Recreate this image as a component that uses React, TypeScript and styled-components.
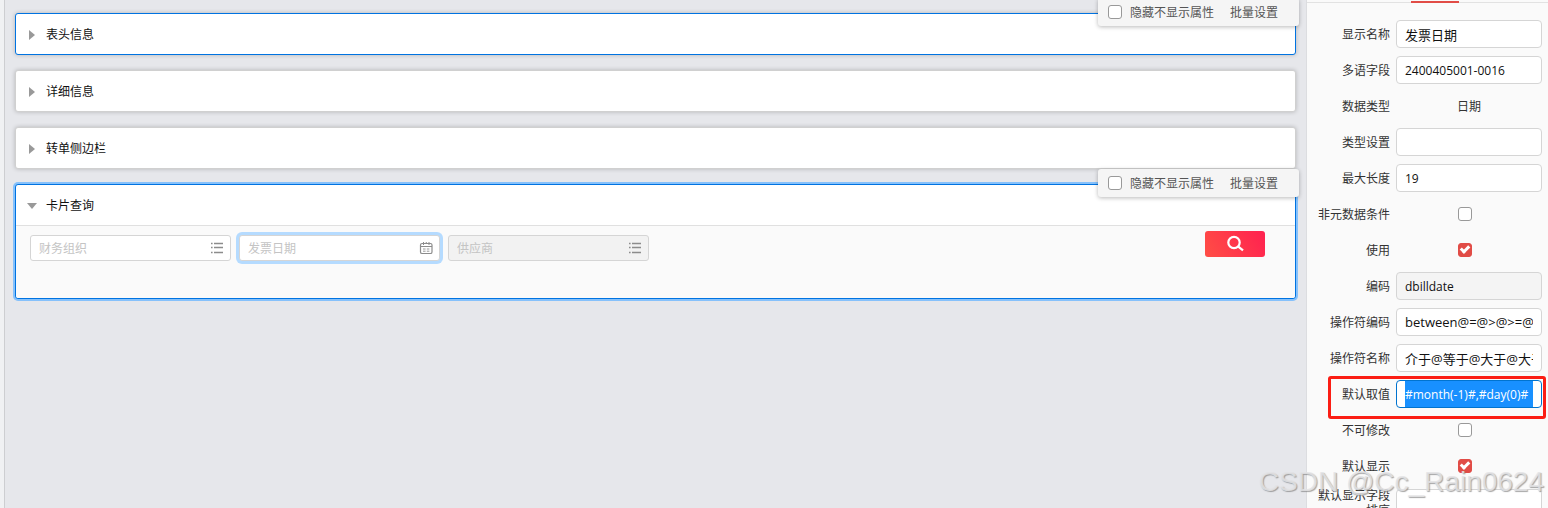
import React, { useId, useState } from 'react';
import styled, { createGlobalStyle, css } from 'styled-components';

const GlobalStyle = createGlobalStyle`
  *, *::before, *::after { box-sizing: border-box; }
  body {
    margin: 0;
    overflow: hidden;
    font: 12px/18px "Open Sans", "Noto Sans CJK SC", sans-serif;
    color: #111;
    background: #e6e7eb;
  }
  button, input { font: inherit; color: inherit; margin: 0; }
`;

const Page = styled.div`
  position: relative;
  display: flex;
  height: 100vh;
  overflow: hidden;
`;

const Rail = styled.div`
  flex: 0 0 5px;
  background: #f0f1f3;
  border-right: 1px solid #cdced1;
`;

const Canvas = styled.main`
  flex: 1;
  min-width: 0;
  display: flex;
  flex-direction: column;
  gap: 15px;
  padding: 13px 10px;
`;

const Card = styled.section<{ $state: 'plain' | 'active' | 'selected' }>`
  position: relative;
  background: #fff;
  border: 1px solid ${p => (p.$state === 'plain' ? '#d0d0d0' : '#0073e1')};
  border-radius: 3px;
  box-shadow: ${p => (p.$state === 'selected' ? '0 0 0 2px #86c1fb' : '0 0 4px rgba(0, 0, 0, 0.22)')};
`;

const CardHead = styled.button`
  display: flex;
  align-items: center;
  width: 100%;
  height: 40px;
  padding: 2px 12px 0;
  gap: 10px;
  border: 0;
  background: none;
  text-align: left;
  cursor: pointer;
`;

const Arrow = styled.svg`
  width: 8px;
  height: 10px;
  overflow: visible;
  fill: #999;
`;

const CardBody = styled.div`
  display: flex;
  align-items: flex-start;
  gap: 8px;
  height: 73px;
  padding: 9px 30px 0 14px;
  background: #fafafa;
  border-top: 1px solid #e0e0e0;
  border-radius: 0 0 3px 3px;
`;

const Toolbar = styled.div`
  position: absolute;
  z-index: 1;
  top: -16px;
  right: -4px;
  display: flex;
  align-items: center;
  height: 28px;
  padding: 0 21px 0 10px;
  gap: 16px;
  background: #f5f5f5;
  border-radius: 3px;
  box-shadow: 0 1px 4px rgba(0, 0, 0, 0.28);
  color: #555;
  line-height: 20px;
`;

const CheckLabel = styled.label`
  display: flex;
  align-items: center;
  gap: 8px;
`;

const ToolText = styled.span`
  padding-top: 2px;
`;

const TextButton = styled.button`
  padding: 2px 0 0;
  border: 0;
  background: none;
  cursor: pointer;
`;

const CheckBox = styled.input.attrs({ type: 'checkbox' })`
  appearance: none;
  display: grid;
  justify-content: center;
  width: 14px;
  height: 14px;
  background: #fff;
  border: 1px solid #999;
  border-radius: 3px;
  &:checked {
    background: #e14c46;
    border-color: #e14c46;
  }
  &:checked::after {
    content: '';
    width: 6px;
    height: 9px;
    border: solid #fff;
    border-width: 0 3px 3px 0;
    transform: rotate(45deg);
  }
`;

const Field = styled.div<{ $focus?: boolean; $off?: boolean }>`
  display: flex;
  align-items: center;
  width: 201px;
  height: 26px;
  padding: 0 6px 0 8px;
  background: ${p => (p.$off ? '#f2f2f2' : '#fff')};
  border: 1px solid #d5d5d5;
  border-radius: 3px;
  ${p => p.$focus && css`box-shadow: 0 0 0 3px #b5dbff;`}
`;

const FieldInput = styled.input`
  flex: 1;
  min-width: 0;
  padding: 2px 0 0;
  border: 0;
  outline: 0;
  background: none;
  &::placeholder { color: #c4c4c4; opacity: 1; }
`;

const IconButton = styled.button`
  display: flex;
  padding: 0;
  border: 0;
  background: none;
  color: #8c8c8c;
`;

const SearchButton = styled.button`
  display: flex;
  align-items: center;
  justify-content: center;
  width: 60px;
  height: 26px;
  margin: -4px 0 0 auto;
  padding: 0;
  border: 0;
  border-radius: 3px;
  background: linear-gradient(60deg, #ff4e45, #ff2150);
  color: #fff;
`;

const Panel = styled.aside`
  flex: 0 0 242px;
  background: #fafafa;
  border-left: 1px solid #dcdde0;
`;

const TabStrip = styled.div`
  display: flex;
  align-items: flex-end;
  height: 3px;
  padding-left: 104px;
  border-bottom: 1px solid #e2e2e2;
`;

const ActiveTab = styled.div`
  width: 48px;
  height: 2px;
  margin-bottom: -1px;
  background: #e14c46;
`;

const Form = styled.form`
  display: flex;
  flex-direction: column;
  gap: 8px;
  padding: 17px 6px 0 11px;
`;

const Row = styled.div`
  position: relative;
  display: grid;
  grid-template-columns: 72px 1fr;
  column-gap: 6px;
  align-items: center;
  height: 28px;
`;

const RowLabel = styled.label`
  text-align: right;
  line-height: 15px;
  color: #333;
`;

const RowText = styled.output`
  padding-top: 2px;
  text-align: center;
  color: #333;
`;

const RowCheck = styled.div`
  display: flex;
  justify-content: center;
  padding-right: 8px;
`;

const RowInput = styled.input<{ $size: number; $selected?: boolean }>`
  width: 100%;
  height: 28px;
  padding: 0 8px;
  font-size: ${p => p.$size}px;
  border: 1px solid #d5d5d5;
  border-radius: 4px;
  outline: 0;
  background: #fff;
  &:read-only { background: #f4f4f4; }
  ${p => p.$selected && css`
    color: #fff;
    border-color: #0073cf;
    background: linear-gradient(#1890ff, #1890ff) content-box, #fff;
  `}
`;

const Highlight = styled.span`
  position: absolute;
  inset: -4px -4px -11px 10px;
  border: 3px solid #fb1d14;
  border-radius: 3px;
  pointer-events: none;
`;

const Watermark = styled.div`
  position: absolute;
  right: 4px;
  bottom: 8px;
  font: 28px/36px "Liberation Sans", Arial, sans-serif;
  color: rgba(228, 228, 230, 0.85);
  text-shadow: 1px 1px 1px rgba(120, 120, 120, 0.65);
  pointer-events: none;
`;

const ListIcon = () => (
  <svg width="14" height="12" viewBox="0 0 14 12" stroke="currentColor" fill="none">
    <path d="M4 1.5h9M4 5.5h9M4 10.5h9" strokeWidth="1.3" />
    <path d="M1 1.5h1.6M1 5.5h1.6M1 10.5h1.6" strokeWidth="1.6" />
  </svg>
);

const CalendarIcon = () => (
  <svg width="14" height="14" viewBox="0 0 14 14" stroke="currentColor" fill="none">
    <rect x="1.5" y="2.5" width="11.5" height="10" rx="1.6" strokeWidth="1.2" />
    <path d="M1.5 5.5h11.5M4.5 1v3M7.25 1v2M10 1v3" />
    <path d="M4 8h2.6M7.8 8h2.6M4 10.2h2.6M7.8 10.2h2.6" strokeWidth="0.9" />
  </svg>
);

const SearchIcon = () => (
  <svg width="18" height="18" viewBox="0 0 18 18" stroke="currentColor" fill="none" strokeWidth="2.2">
    <circle cx="8" cy="7.5" r="5.7" />
    <path d="M12 11.3l5 4.1" />
  </svg>
);

function CardTools() {
  return (
    <Toolbar>
      <CheckLabel><CheckBox /><ToolText>隐藏不显示属性</ToolText></CheckLabel>
      <TextButton type="button">批量设置</TextButton>
    </Toolbar>
  );
}

type CardProps = {
  title: string;
  state?: 'plain' | 'active' | 'selected';
  expanded?: boolean;
  children?: React.ReactNode;
};

function AreaCard({ title, state = 'plain', expanded = false, children }: CardProps) {
  const [open, setOpen] = useState(expanded);
  return (
    <Card $state={state}>
      {state !== 'plain' && <CardTools />}
      <CardHead type="button" aria-expanded={open} onClick={() => setOpen(!open)}>
        <Arrow viewBox="0 0 8 10"><path d={open ? 'M-1 2h10l-5 6z' : 'M1 0l6 5-6 5z'} /></Arrow>
        {title}
      </CardHead>
      {open && children && <CardBody>{children}</CardBody>}
    </Card>
  );
}

type PropertyProps = {
  label: string;
  value?: string;
  size?: number;
  kind?: 'input' | 'text' | 'check';
  checked?: boolean;
  locked?: boolean;
  selected?: boolean;
};

function Property({ label, value = '', size = 13, kind = 'input', checked, locked, selected }: PropertyProps) {
  const id = useId();
  return (
    <Row>
      <RowLabel htmlFor={id}>{label}</RowLabel>
      {kind === 'text' && <RowText id={id}>{value}</RowText>}
      {kind === 'check' && <RowCheck><CheckBox id={id} defaultChecked={checked} /></RowCheck>}
      {kind === 'input' && (
        <RowInput id={id} type="text" defaultValue={value} readOnly={locked} $size={size} $selected={selected} />
      )}
      {selected && <Highlight />}
    </Row>
  );
}

export default function App() {
  return (
    <>
      <GlobalStyle />
      <Page>
        <Rail />
        <Canvas>
          <AreaCard title="表头信息" state="active" />
          <AreaCard title="详细信息" />
          <AreaCard title="转单侧边栏" />
          <AreaCard title="卡片查询" state="selected" expanded>
            <Field>
              <FieldInput placeholder="财务组织" aria-label="财务组织" />
              <IconButton type="button" aria-label="财务组织"><ListIcon /></IconButton>
            </Field>
            <Field $focus>
              <FieldInput placeholder="发票日期" aria-label="发票日期" />
              <IconButton type="button" aria-label="发票日期"><CalendarIcon /></IconButton>
            </Field>
            <Field $off>
              <FieldInput placeholder="供应商" aria-label="供应商" disabled />
              <IconButton type="button" aria-label="供应商" disabled><ListIcon /></IconButton>
            </Field>
            <SearchButton type="button" aria-label="查询"><SearchIcon /></SearchButton>
          </AreaCard>
        </Canvas>
        <Panel>
          <TabStrip><ActiveTab /></TabStrip>
          <Form>
            <Property label="显示名称" value="发票日期" />
            <Property label="多语字段" value="2400405001-0016" size={12} />
            <Property label="数据类型" kind="text" value="日期" />
            <Property label="类型设置" />
            <Property label="最大长度" value="19" size={12} />
            <Property label="非元数据条件" kind="check" />
            <Property label="使用" kind="check" checked />
            <Property label="编码" value="dbilldate" size={12} locked />
            <Property label="操作符编码" value="between@=@>@>=@<@<=" />
            <Property label="操作符名称" value="介于@等于@大于@大于等于@小于" />
            <Property label="默认取值" value="#month(-1)#,#day(0)#" size={12} selected />
            <Property label="不可修改" kind="check" />
            <Property label="默认显示" kind="check" checked />
            <Property label="默认显示字段排序" />
          </Form>
        </Panel>
        <Watermark>CSDN @Cc_Rain0624</Watermark>
      </Page>
    </>
  );
}
